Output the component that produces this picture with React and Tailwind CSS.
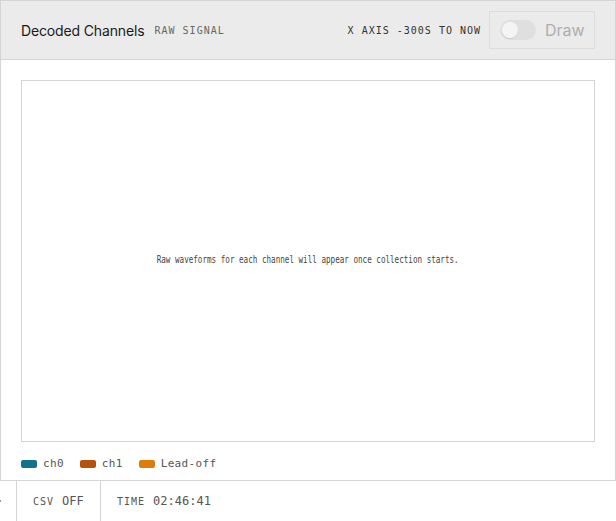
import React from "react";

const mono = { fontFamily: '"DejaVu Sans Mono", "Liberation Mono", monospace' };

export default function App() {
  return (
    <div className="w-[616px] h-[521px] bg-white overflow-hidden" style={{ fontFamily: 'Inter, "Noto Sans", sans-serif' }}>
      <div className="border border-[#d4d4d4] h-[481px] flex flex-col">
        <div className="h-[59px] bg-[#ebebeb] border-b border-[#d4d4d4] flex items-center pl-[20px] pr-[20px] shrink-0">
          <div className="text-[14px] text-[#1a1a1a] tracking-[-0.01em]">Decoded Channels</div>
          <div className="ml-[10px] text-[10px] tracking-[0.1em] text-[#666] mt-[1px]" style={mono}>RAW SIGNAL</div>
          <div className="ml-auto text-[10px] tracking-[0.1em] text-[#333] font-medium" style={mono}>X AXIS -300S TO NOW</div>
          <div className="ml-[8px] w-[106px] h-[38px] border border-[#dcdcdc] flex items-center pl-[10px] gap-[9px] opacity-90">
            <div className="w-[36px] h-[20px] rounded-full bg-[#dedede] relative">
              <div className="absolute left-[2px] top-[2px] w-[16px] h-[16px] rounded-full bg-[#f6f6f6] shadow-[0_1px_1px_rgba(0,0,0,0.08)]" />
            </div>
            <div className="text-[16px] text-[#a8a8a8]">Draw</div>
          </div>
        </div>
        <div className="px-[20px] pt-[20px] flex flex-col flex-1">
          <div className="h-[362px] border border-[#d4d4d4] flex items-center justify-center">
            <span className="inline-block -mt-[3px] text-[10px] text-[#444] scale-x-[0.76] whitespace-nowrap" style={mono}>
              Raw waveforms for each channel will appear once collection starts.
            </span>
          </div>
          <div className="flex items-center gap-[16px] h-[38px] pt-[6px]">
            {[
              ["ch0", "bg-[#13708e]"],
              ["ch1", "bg-[#b4530c]"],
              ["Lead-off", "bg-[#e07c0a]"],
            ].map(([l, c]) => (
              <div key={l} className="flex items-center gap-[6px]">
                <div className={`w-[16px] h-[8px] rounded-[2px] ${c}`} />
                <span className="text-[11px] tracking-[0.03em] text-[#555]" style={mono}>{l}</span>
              </div>
            ))}
          </div>
        </div>
      </div>
      <div className="h-[40px] flex items-stretch">
        <div className="w-[16px] flex items-center">
          <div className="w-[1px] h-[2px] bg-[#999] ml-0" />
        </div>
        <div className="border-l border-[#d4d4d4] w-[84px] flex items-center pl-[16px] gap-[8px]">
          <span className="text-[10px] tracking-[0.1em] text-[#555]" style={mono}>CSV</span>
          <span className="text-[12px] text-[#555]" style={mono}>OFF</span>
        </div>
        <div className="border-l border-[#d4d4d4] flex items-center pl-[16px] gap-[8px]">
          <span className="text-[10px] tracking-[0.1em] text-[#555]" style={mono}>TIME</span>
          <span className="text-[12px] text-[#555]" style={mono}>02:46:41</span>
        </div>
      </div>
    </div>
  );
}
